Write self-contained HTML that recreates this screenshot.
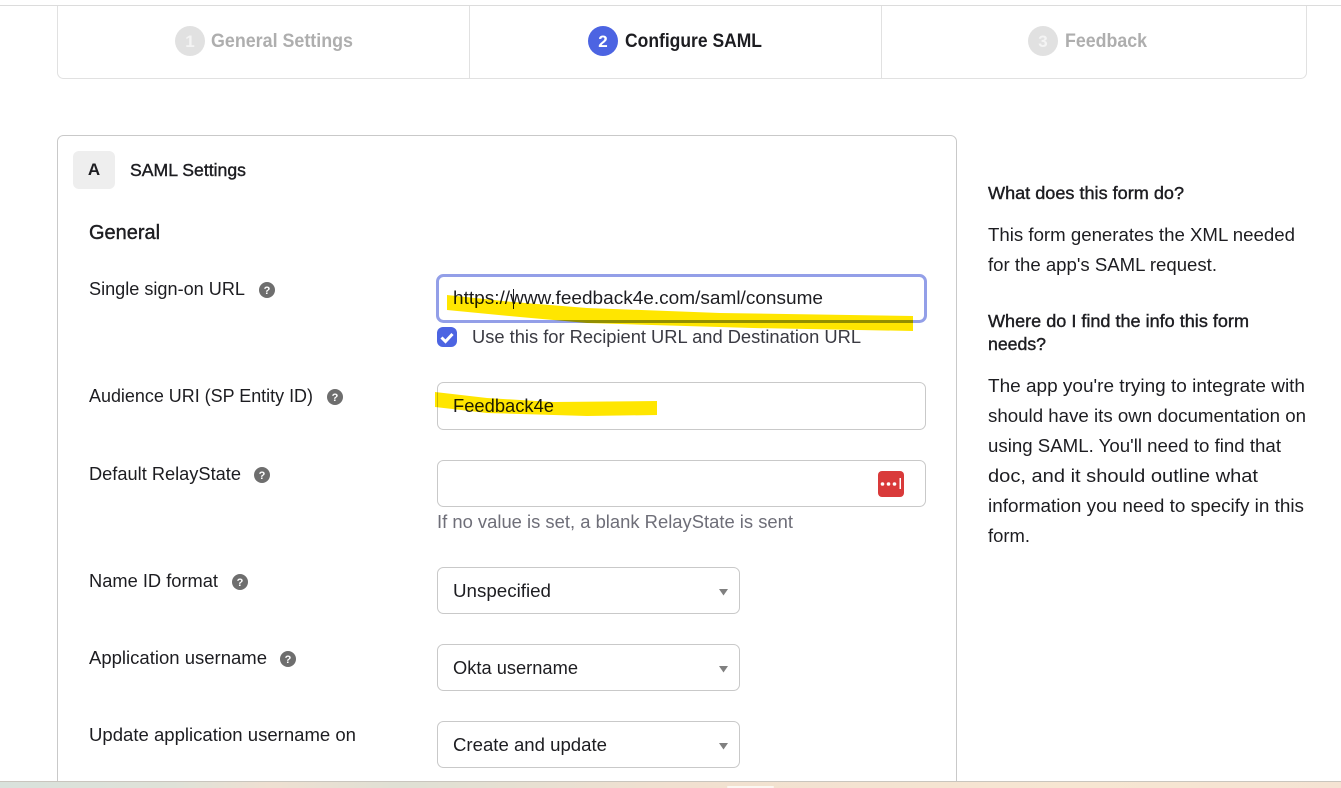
<!DOCTYPE html>
<html lang="en">
<head>
<meta charset="utf-8">
<title>Configure SAML</title>
<style>
html,body{margin:0;padding:0;width:1341px;height:788px;overflow:hidden;background:#fff}
svg{position:absolute;left:0;top:0;display:block;overflow:hidden}
text{font-family:"Liberation Sans",sans-serif;font-size:18px;fill:#1d1d21}
.b{font-weight:700}
.m{stroke:#1d1d21;stroke-width:.4px;font-size:17.5px}
.g{font-weight:700;fill:#aeaeae;font-size:19px}
.h{fill:#6e6e78}
.q{font-size:11px;font-weight:700;fill:#fff;text-anchor:middle}
.box{fill:#fff;stroke:#c9c9c9;stroke-width:1}
</style>
</head>
<body>
<svg width="1341" height="788" viewBox="0 0 1341 788" xmlns="http://www.w3.org/2000/svg">
<defs>
<linearGradient id="bot" x1="0" x2="1" y1="0" y2="0">
<stop offset="0" stop-color="#d9e2dc"/>
<stop offset=".13" stop-color="#dfe2d8"/>
<stop offset=".2" stop-color="#efe0d2"/>
<stop offset=".3" stop-color="#dfe0d4"/>
<stop offset=".5" stop-color="#f1e0d0"/>
<stop offset=".8" stop-color="#f7e6d2"/>
<stop offset="1" stop-color="#f5e3d3"/>
</linearGradient>
</defs>
<path d="M57.5 6V72.5a6 6 0 0 0 6 6H1300.5a6 6 0 0 0 6-6V6" fill="#fff" stroke="#e1e1e1"/>
<rect x="0" y="5" width="1341" height="1" fill="#dcdcdc"/>
<rect x="469" y="6" width="1" height="72" fill="#e1e1e1"/>
<rect x="881" y="6" width="1" height="72" fill="#e1e1e1"/>
<circle cx="190" cy="41" r="15" fill="#e1e1e1"/>
<text x="190" y="47" class="b" style="fill:#f4f4f4;font-size:17px" text-anchor="middle">1</text>
<text x="211" y="47" class="g" textLength="142" lengthAdjust="spacingAndGlyphs">General Settings</text>
<circle cx="603" cy="41" r="15" fill="#4c64e2"/>
<text x="603" y="47" class="b" style="fill:#fff;font-size:17px" text-anchor="middle">2</text>
<text x="625" y="47" class="b" style="font-size:19px" textLength="137" lengthAdjust="spacingAndGlyphs">Configure SAML</text>
<circle cx="1043" cy="41" r="15" fill="#e1e1e1"/>
<text x="1043" y="47" class="b" style="fill:#f4f4f4;font-size:17px" text-anchor="middle">3</text>
<text x="1065" y="47" class="g" textLength="82" lengthAdjust="spacingAndGlyphs">Feedback</text>

<path d="M57.5 781V141.5a6 6 0 0 1 6-6H950.5a6 6 0 0 1 6 6V781" fill="#fff" stroke="#c9c9c9"/>
<rect x="73" y="151" width="42" height="38" rx="6" fill="#eeeeee"/>
<text x="94" y="175" class="b" text-anchor="middle" style="font-size:17px">A</text>
<text x="130" y="176" class="m" textLength="116" lengthAdjust="spacingAndGlyphs">SAML Settings</text>
<text x="89" y="239" class="m" style="font-size:20px" textLength="71" lengthAdjust="spacingAndGlyphs">General</text>

<text x="89" y="295" textLength="156" lengthAdjust="spacingAndGlyphs">Single sign-on URL</text>
<circle cx="267" cy="290" r="8" fill="#6e6e6e"/><text x="267" y="294" class="q">?</text>
<text x="89" y="402" textLength="224" lengthAdjust="spacingAndGlyphs">Audience URI (SP Entity ID)</text>
<circle cx="335" cy="397" r="8" fill="#6e6e6e"/><text x="335" y="401" class="q">?</text>
<text x="89" y="480" textLength="152" lengthAdjust="spacingAndGlyphs">Default RelayState</text>
<circle cx="262" cy="475" r="8" fill="#6e6e6e"/><text x="262" y="479" class="q">?</text>
<text x="89" y="587" textLength="129" lengthAdjust="spacingAndGlyphs">Name ID format</text>
<circle cx="240" cy="582" r="8" fill="#6e6e6e"/><text x="240" y="586" class="q">?</text>
<text x="89" y="664" textLength="178" lengthAdjust="spacingAndGlyphs">Application username</text>
<circle cx="288" cy="659" r="8" fill="#6e6e6e"/><text x="288" y="663" class="q">?</text>
<text x="89" y="741" textLength="267" lengthAdjust="spacingAndGlyphs">Update application username on</text>

<rect x="437.5" y="275.5" width="488" height="46" rx="6" fill="#fff" stroke="#939fe8" stroke-width="3"/>
<text x="453" y="304" textLength="370" lengthAdjust="spacingAndGlyphs">https://www.feedback4e.com/saml/consume</text>
<rect x="513" y="289" width="1" height="20" fill="#1d1d21"/>
<rect x="437" y="327" width="20" height="20" rx="6" fill="#4c64e2"/>
<path d="M441.5 337.5l4 4 7-7.5" fill="none" stroke="#fff" stroke-width="3"/>
<text x="472" y="343" textLength="389" lengthAdjust="spacingAndGlyphs" style="fill:#3a3a42">Use this for Recipient URL and Destination URL</text>

<rect x="437.5" y="382.5" width="488" height="47" rx="6" class="box"/>
<text x="453" y="412" textLength="101" lengthAdjust="spacingAndGlyphs">Feedback4e</text>

<rect x="437.5" y="460.5" width="488" height="46" rx="6" class="box"/>
<rect x="878" y="471" width="26" height="26" rx="4" fill="#d93a3a"/>
<circle cx="882.5" cy="484" r="1.8" fill="#fff"/><circle cx="888.5" cy="484" r="1.8" fill="#fff"/><circle cx="894.5" cy="484" r="1.8" fill="#fff"/>
<rect x="899.5" y="478" width="1.5" height="11" fill="#fff"/>
<text x="437" y="528" class="h" textLength="356" lengthAdjust="spacingAndGlyphs">If no value is set, a blank RelayState is sent</text>

<rect x="437.5" y="567.5" width="302" height="46" rx="6" class="box"/>
<text x="453" y="597" textLength="98" lengthAdjust="spacingAndGlyphs">Unspecified</text>
<path d="M719 589h9l-4.5 6.5z" fill="#808080"/>
<rect x="437.5" y="644.5" width="302" height="46" rx="6" class="box"/>
<text x="453" y="674" textLength="125" lengthAdjust="spacingAndGlyphs">Okta username</text>
<path d="M719 666h9l-4.5 6.5z" fill="#808080"/>
<rect x="437.5" y="721.5" width="302" height="46" rx="6" class="box"/>
<text x="453" y="751" textLength="154" lengthAdjust="spacingAndGlyphs">Create and update</text>
<path d="M719 743h9l-4.5 6.5z" fill="#808080"/>

<g style="mix-blend-mode:multiply">
<path d="M447 295L513 302L587 308L720 313L913 316V331L753 328L587 323L520 317L447 310Z" fill="#ffe600"/>
<path d="M435 392L487 398L553 402L657 401V415L587 416L487 413L435 407Z" fill="#ffe600"/>
</g>

<text x="988" y="199" class="m" textLength="196" lengthAdjust="spacingAndGlyphs">What does this form do?</text>
<text x="988" y="241" textLength="307" lengthAdjust="spacingAndGlyphs">This form generates the XML needed</text>
<text x="988" y="271" textLength="229" lengthAdjust="spacingAndGlyphs">for the app's SAML request.</text>
<text x="988" y="327" class="m" textLength="261" lengthAdjust="spacingAndGlyphs">Where do I find the info this form</text>
<text x="988" y="350" class="m" textLength="58" lengthAdjust="spacingAndGlyphs">needs?</text>
<text x="988" y="392" textLength="317" lengthAdjust="spacingAndGlyphs">The app you're trying to integrate with</text>
<text x="988" y="422" textLength="318" lengthAdjust="spacingAndGlyphs">should have its own documentation on</text>
<text x="988" y="452" textLength="293" lengthAdjust="spacingAndGlyphs">using SAML. You'll need to find that</text>
<text x="988" y="482" textLength="270" lengthAdjust="spacingAndGlyphs">doc, and it should outline what</text>
<text x="988" y="512" textLength="316" lengthAdjust="spacingAndGlyphs">information you need to specify in this</text>
<text x="988" y="542" textLength="42" lengthAdjust="spacingAndGlyphs">form.</text>

<rect x="0" y="781" width="1341" height="7" fill="url(#bot)"/>
<rect x="0" y="781" width="1341" height="1" fill="#c9c5be"/>
<rect x="727" y="786" width="47" height="2" rx="1" fill="#fbf7f1"/>
</svg>
</body>
</html>
